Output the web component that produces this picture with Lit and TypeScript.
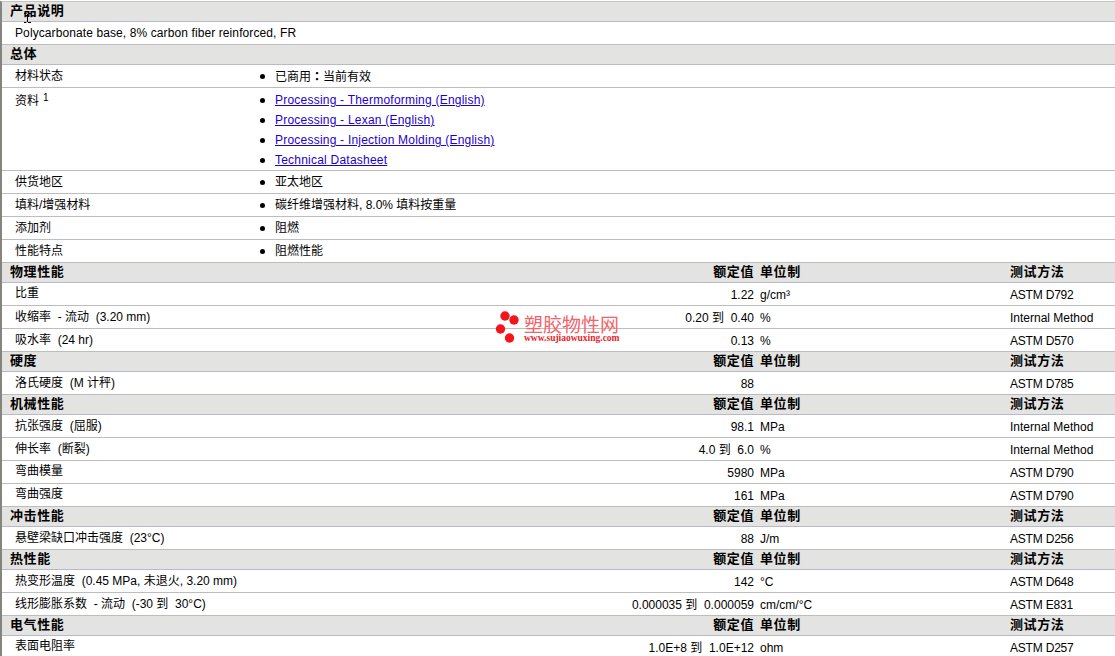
import { LitElement, html, css, nothing } from "lit";
import { customElement } from "lit/decorators.js";

type Row = { label: string; cond?: string; value?: string; unit?: string; method?: string };
type Section = { title: string; rows: Row[] };

const sections: Section[] = [
  { title: "物理性能", rows: [
    { label: "比重", value: "1.22", unit: "g/cm³", method: "ASTM D792" },
    { label: "收缩率", cond: "  - 流动  (3.20 mm)", value: "0.20 到  0.40", unit: "%", method: "Internal Method" },
    { label: "吸水率", cond: "  (24 hr)", value: "0.13", unit: "%", method: "ASTM D570" },
  ]},
  { title: "硬度", rows: [
    { label: "洛氏硬度", cond: "  (M 计秤)", value: "88", method: "ASTM D785" },
  ]},
  { title: "机械性能", rows: [
    { label: "抗张强度", cond: "  (屈服)", value: "98.1", unit: "MPa", method: "Internal Method" },
    { label: "伸长率", cond: "  (断裂)", value: "4.0 到  6.0", unit: "%", method: "Internal Method" },
    { label: "弯曲模量", value: "5980", unit: "MPa", method: "ASTM D790" },
    { label: "弯曲强度", value: "161", unit: "MPa", method: "ASTM D790" },
  ]},
  { title: "冲击性能", rows: [
    { label: "悬壁梁缺口冲击强度", cond: "  (23°C)", value: "88", unit: "J/m", method: "ASTM D256" },
  ]},
  { title: "热性能", rows: [
    { label: "热变形温度", cond: "  (0.45 MPa, 未退火, 3.20 mm)", value: "142", unit: "°C", method: "ASTM D648" },
    { label: "线形膨胀系数", cond: "  - 流动  (-30 到  30°C)", value: "0.000035 到  0.000059", unit: "cm/cm/°C", method: "ASTM E831" },
  ]},
  { title: "电气性能", rows: [
    { label: "表面电阻率", value: "1.0E+8 到  1.0E+12", unit: "ohm", method: "ASTM D257" },
  ]},
];

const general = [
  { label: "供货地区", item: "亚太地区" },
  { label: "填料/增强材料", item: "碳纤维增强材料, 8.0% 填料按重量" },
  { label: "添加剂", item: "阻燃" },
  { label: "性能特点", item: "阻燃性能" },
];

const links = [
  "Processing - Thermoforming (English)",
  "Processing - Lexan (English)",
  "Processing - Injection Molding (English)",
  "Technical Datasheet",
];

@customElement("app-root")
export class AppRoot extends LitElement {
  static styles = css`
    :host {
      display: block;
      position: relative;
      box-sizing: border-box;
      width: 1115px;
      height: 656px;
      padding-top: 1px;
      overflow: hidden;
      background: #fff;
      font-family: "Liberation Sans", "Noto Sans CJK SC", sans-serif;
      font-size: 12px;
      line-height: 16px;
      color: #000;
    }
    .sheet {
      border-left: 2px solid #85857f;
      border-top: 1px solid #c4c4c2;
    }
    .head, .row {
      display: grid;
      grid-template-columns: 752px 6px 250px 1fr;
      box-sizing: border-box;
      align-items: center;
    }
    .head {
      height: 20px;
      background: #e3e3e1;
      border-bottom: 1px solid #b9b9c9;
      font-size: 13px;
      font-weight: 700;
      letter-spacing: 0.6px;
      padding-bottom: 1px;
    }
    .head .title { grid-column: 1; padding-left: 8px; display: flex; justify-content: space-between; }
    .head .u { grid-column: 3; }
    .head .m { grid-column: 4; }
    .row {
      height: 23px;
      border-bottom: 1px solid #bdbdbd;
    }
    .row .left {
      grid-column: 1;
      padding-left: 13px;
      display: flex;
      justify-content: space-between;
      align-items: center;
      white-space: pre;
    }
    .row .lab { padding-bottom: 2px; }
    .row .lab.cond { padding-bottom: 0; }
    .row .val, .row .u, .row .m { padding-top: 2px; }
    .row .u { grid-column: 3; }
    .row .m { grid-column: 4; }
    .row .m.astm { letter-spacing: -0.2px; }
    .plain {
      height: 23px;
      box-sizing: border-box;
      padding-left: 13px;
      display: flex;
      align-items: center;
      border-bottom: 1px solid #bdbdbd;
      letter-spacing: 0.1px;
    }
    .gen {
      display: grid;
      grid-template-columns: 260px 1fr;
      box-sizing: border-box;
      border-bottom: 1px solid #bdbdbd;
      height: 23px;
      align-items: center;
      padding-left: 13px;
    }
    .gen.docs { height: 83px; align-items: start; padding-top: 2px; }
    .gen.docs .lab { line-height: 20px; padding-top: 1px; }
    .gen sup { font-size: 10px; line-height: 0; margin-left: 4px; vertical-align: 4px; }
    ul { list-style: none; margin: 0; padding: 0; }
    .gen li {
      position: relative;
      height: 20px;
      line-height: 20px;
    }
    .gen li::before {
      content: "";
      position: absolute;
      left: -15px;
      top: 8px;
      width: 5px;
      height: 5px;
      border-radius: 50%;
      background: #000;
    }
    .gen a { color: #1c00cf; text-decoration: underline; letter-spacing: 0.22px; }
    .colon { font-family: "Noto Sans CJK TC", sans-serif; font-weight: 700; }
    .mark {
      position: absolute;
      left: 495px;
      top: 309px;
      width: 128px;
      height: 38px;
      pointer-events: none;
    }
    .mark svg { position: absolute; left: 0; top: 0; }
    .mark .cn {
      position: absolute;
      left: 29px;
      top: 8px;
      font-family: "Liberation Serif", "Noto Sans CJK SC", serif;
      font-size: 19px;
      line-height: 17px;
      color: #f2646a;
      white-space: nowrap;
    }
    .mark .en {
      position: absolute;
      left: 29px;
      top: 25px;
      font-family: "Liberation Serif", serif;
      font-size: 9.5px;
      font-weight: 700;
      line-height: 8px;
      color: #e8262c;
      white-space: nowrap;
    }
    .cursor { position: absolute; left: 24px; top: 13px; }
  `;

  private head(title: string, cols = false) {
    return html`<div class="head">
      <div class="title"><span>${title}</span>${cols ? html`<span>额定值</span>` : nothing}</div>
      ${cols ? html`<div class="u">单位制</div><div class="m">测试方法</div>` : nothing}
    </div>`;
  }

  render() {
    return html`
      <div class="sheet">
        ${this.head("产品说明")}
        <div class="plain">Polycarbonate base, 8% carbon fiber reinforced, FR</div>
        ${this.head("总体")}
        <div class="gen"><span>材料状态</span><ul><li>已商用<span class="colon">：</span>当前有效</li></ul></div>
        <div class="gen docs">
          <span class="lab">资料<sup>1</sup></span>
          <ul>${links.map((l) => html`<li><a href="#">${l}</a></li>`)}</ul>
        </div>
        ${general.map((g) => html`<div class="gen">
          <span>${g.label}</span><ul><li>${g.item}</li></ul>
        </div>`)}
        ${sections.map((s) => html`
          ${this.head(s.title, true)}
          ${s.rows.map((r) => html`<div class="row">
            <div class="left"><span class="lab ${r.cond ? "cond" : ""}">${r.label}${r.cond ?? ""}</span><span class="val">${r.value}</span></div>
            <div class="u">${r.unit ?? ""}</div>
            <div class="m ${r.method?.startsWith("ASTM") ? "astm" : ""}">${r.method}</div>
          </div>`)}
        `)}
      </div>
      <div class="mark">
        <svg width="28" height="38" viewBox="0 0 28 38" fill="#f5141c">
          <circle cx="10" cy="7" r="4.7"></circle>
          <circle cx="19" cy="11" r="4.7"></circle>
          <circle cx="5.5" cy="20" r="4.7"></circle>
          <circle cx="14.5" cy="29" r="4.7"></circle>
        </svg>
        <div class="cn">塑胶物性网</div>
        <div class="en">www.sujiaowuxing.com</div>
      </div>
      <svg class="cursor" width="7" height="10" viewBox="0 0 7 10" fill="none" stroke="#000" stroke-width="1">
        <path d="M0 .5h2.5M4 .5h3M3.5 1v8M0 9.5h2.5M4 9.5h3"></path>
      </svg>
    `;
  }
}
